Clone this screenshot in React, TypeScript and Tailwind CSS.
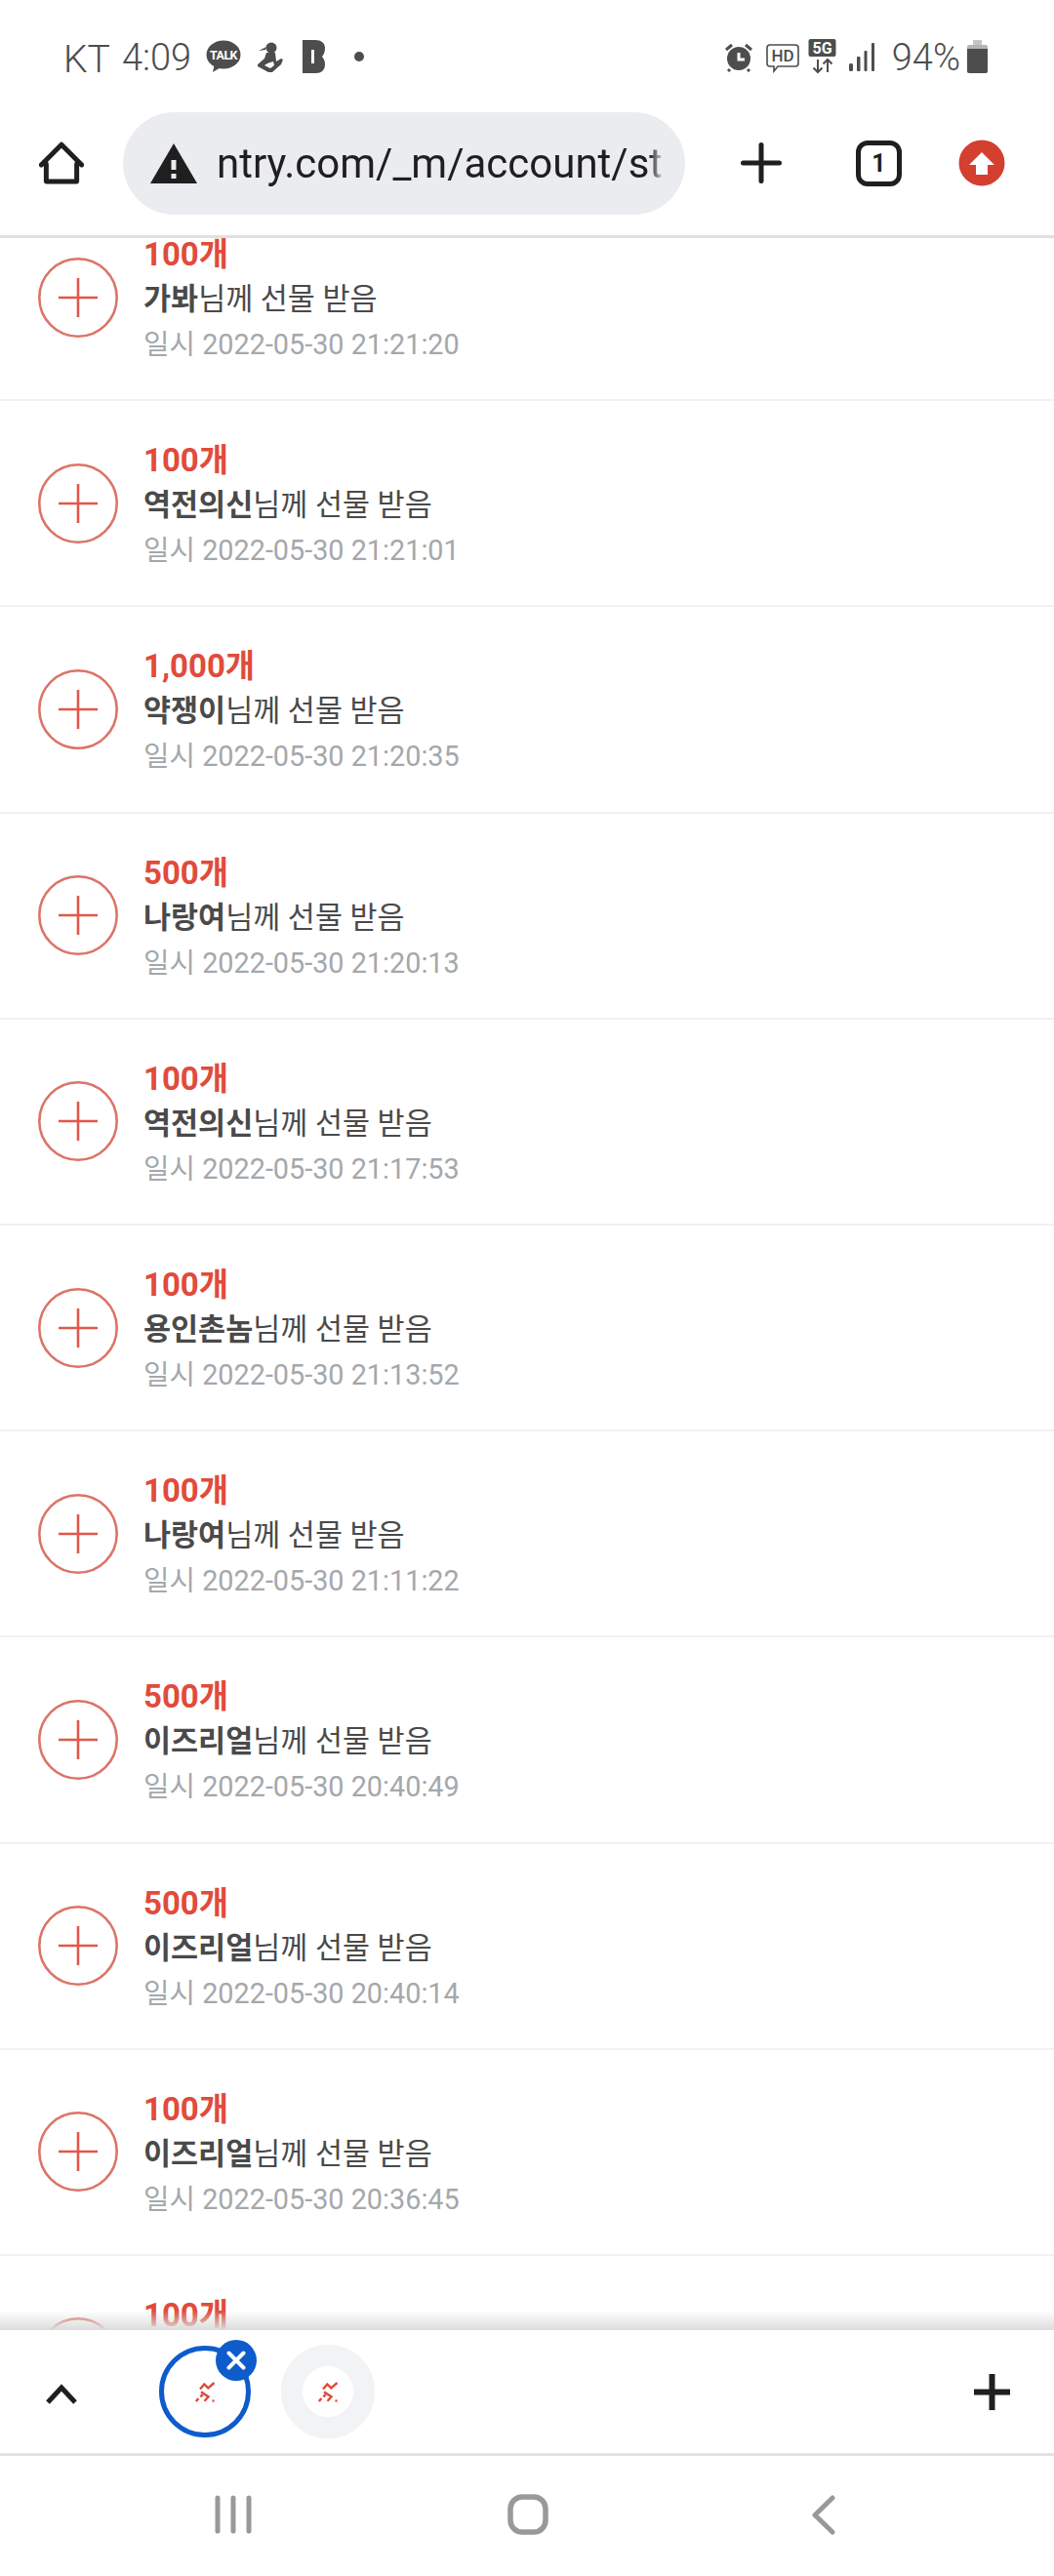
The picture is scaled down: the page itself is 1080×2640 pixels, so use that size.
import React from "react";

const rows = [
  ["100개", "가봐", "2022-05-30 21:21:20"],
  ["100개", "역전의신", "2022-05-30 21:21:01"],
  ["1,000개", "약쟁이", "2022-05-30 21:20:35"],
  ["500개", "나랑여", "2022-05-30 21:20:13"],
  ["100개", "역전의신", "2022-05-30 21:17:53"],
  ["100개", "용인촌놈", "2022-05-30 21:13:52"],
  ["100개", "나랑여", "2022-05-30 21:11:22"],
  ["500개", "이즈리얼", "2022-05-30 20:40:49"],
  ["500개", "이즈리얼", "2022-05-30 20:40:14"],
  ["100개", "이즈리얼", "2022-05-30 20:36:45"],
  ["100개", "", ""],
];

function Favicon() {
  return (
    <svg width="21" height="21" viewBox="0 0 21 21" fill="none" stroke="#dd4b39" strokeWidth="2.4">
      <path d="M5 7.5 9.3 2.5l4 3.8L19.5 1" />
      <path d="M.8 20 3.5 17M5.3 15.3 7.8 13" />
      <path d="M6 10.3l7.5 5-4 4.5" />
      <path d="M17.5 19.5h2" />
    </svg>
  );
}

function Row({ amount, name, date }: { amount: string; name: string; date: string }) {
  return (
    <div className="h-[211.2px] shrink-0 box-border border-b-2 border-[#f1f1f1] flex items-center pl-[39px]">
      <svg width="82" height="82" viewBox="0 0 82 82" fill="none" className="shrink-0">
        <circle cx="41" cy="41" r="39.7" stroke="#dc7468" strokeWidth="2.6" />
        <path d="M21 41h40M41 21v40" stroke="#e2574a" strokeWidth="2.6" />
      </svg>
      <div className="ml-[26px] pt-[5px] flex flex-col">
        <div className="h-[46px] leading-[46px] text-[33px] font-bold text-[#e14b3b]">{amount}</div>
        <div className="h-[46px] leading-[46px] text-[30.5px] text-[#4a4a4a]">
          <b className="font-bold">{name}</b>님께 선물 받음
        </div>
        <div className="h-[46px] leading-[46px] text-[28.8px] text-[#a4a8ac]">일시 {date}</div>
      </div>
    </div>
  );
}

export default function App() {
  return (
    <div className="w-[1080px] h-[2640px] flex flex-col overflow-hidden bg-white font-[Roboto,'Noto_Sans_CJK_KR',sans-serif]">
      {/* status bar */}
      <div className="h-[115px] shrink-0 flex items-start pt-[38px] text-[#4d4d4d] font-light">
        <span className="ml-[65px] text-[39px] leading-[44px] mt-[1px]">KT</span>
        <span className="ml-[12px] text-[38px] leading-[42px]">4:09</span>
        <svg width="36" height="34" viewBox="0 0 36 34" className="ml-[15px] mt-[3px]">
          <ellipse cx="18" cy="15" rx="17.5" ry="14.5" fill="#4d4d4d" />
          <path d="M9 24 7 33l10-6z" fill="#4d4d4d" />
          <text x="18" y="19.5" textAnchor="middle" fontSize="12.5" fontWeight="700" fill="#fff" fontFamily="Roboto" letterSpacing="-0.6">TALK</text>
        </svg>
        <svg width="28" height="32" viewBox="0 0 28 32" fill="#4d4d4d" className="ml-[15px] mt-[5px]">
          <circle cx="16" cy="6" r="5.5" />
          <path d="M11 5 3 9l7-1z" />
          <path d="M11 11h9l1 9 5-3 2 1-2 5-9 8-4 0-11-6 0-2 7-6zm1 11-3 2 6 3 4-3-1-4z" fillRule="evenodd" />
        </svg>
        <svg width="25" height="34" viewBox="0 0 25 34" className="ml-[19px] mt-[3px]">
          <path d="M1 0h13c6 0 10 3 10 8 0 4-1 7-3 9 2 2 3 5 3 8 0 6-4 9-9 9H1z" fill="#4d4d4d" />
          <rect x="10" y="10" width="3" height="14" fill="#fff" />
        </svg>
        <div className="ml-[29px] mt-[15px] w-[10px] h-[10px] rounded-full bg-[#4d4d4d]" />
        <div className="flex-1" />
        <svg width="30" height="30" viewBox="0 0 30 30" fill="#4d4d4d" className="mt-[6px]">
          <circle cx="15" cy="16" r="12" />
          <path d="M2 7l6-5M28 7l-6-5M6 27l-2 2M24 27l2 2" stroke="#4d4d4d" strokeWidth="3" />
          <path d="M15 10v7h6" stroke="#fff" strokeWidth="3" fill="none" />
        </svg>
        <svg width="34" height="32" viewBox="0 0 34 32" className="ml-[13px] mt-[7px]">
          <path d="M4 1h26a3 3 0 0 1 3 3v16a3 3 0 0 1-3 3H12l-4 5v-5H4a3 3 0 0 1-3-3V4a3 3 0 0 1 3-3z" fill="none" stroke="#4d4d4d" strokeWidth="1.6" />
          <text x="17" y="18" textAnchor="middle" fontSize="17" fontWeight="500" fill="#4d4d4d" fontFamily="Roboto">HD</text>
        </svg>
        <svg width="29" height="36" viewBox="0 0 29 36" className="ml-[9px] mt-[2px]">
          <rect x="0.5" y="0" width="28" height="18" rx="2" fill="#4d4d4d" />
          <text x="14.5" y="15" textAnchor="middle" fontSize="16" fontWeight="700" fill="#fff" fontFamily="Roboto">5G</text>
          <path d="M10 21v13M5.5 29.5 10 34l4.500-4.500M20 34V21M15.500 25.500 20 21l4.500 4.500" fill="none" stroke="#4d4d4d" strokeWidth="2" />
        </svg>
        <svg width="28" height="30" viewBox="0 0 28 30" fill="#4d4d4d" className="ml-[13px] mt-[6px]">
          <rect x="0" y="21" width="4" height="8" rx="1.500" />
          <rect x="8" y="14" width="3.500" height="15" rx="1" />
          <rect x="15.500" y="8" width="3" height="21" rx="1" />
          <rect x="23" y="0" width="3" height="29" rx="1" />
        </svg>
        <span className="ml-[16px] text-[38px] leading-[42px]">94%</span>
        <svg width="22" height="34" viewBox="0 0 22 34" className="ml-[7px] mr-[67px] mt-[3px]">
          <path d="M6 0h9v5H6z" fill="#c4c4c4" />
          <path d="M2 5h17a2 2 0 0 1 2 2v3H0V7a2 2 0 0 1 2-2z" fill="#b5b5b5" />
          <path d="M0 9h21v23a2 2 0 0 1-2 2H2a2 2 0 0 1-2-2z" fill="#4d4d4d" />
        </svg>
      </div>

      {/* address bar */}
      <div className="h-[129px] shrink-0 box-border border-b-[3px] border-[#e1e1e0] flex items-start text-[#1f1f1f]">
        <svg width="46" height="46" viewBox="0 0 50 50" fill="none" stroke="#1f1f1f" strokeWidth="5.4" strokeLinejoin="round" strokeLinecap="round" className="ml-[40px] mt-[30px]">
          <path d="M8 25v19.500h34V25M2.500 26 25 3.500 47.500 26" />
        </svg>
        <div className="ml-[40px] w-[576px] h-[105px] rounded-full bg-[#ebecf0] flex items-center pl-[28px] overflow-hidden">
          <svg width="48" height="41" viewBox="0 0 48 41" className="shrink-0 -mt-[1px]">
            <path d="M0 41 24 0l24 41z" fill="#1f1f1f" />
            <rect x="21.500" y="17" width="5" height="10" fill="#ebecf0" />
            <rect x="21.500" y="31" width="5" height="5" fill="#ebecf0" />
          </svg>
          <div className="ml-[20px] w-[458px] overflow-hidden whitespace-nowrap text-[42px] leading-[60px] text-[#1f1f1f] [mask-image:linear-gradient(to_right,#000_calc(100%-14px),transparent)]">
            ntry.com/_m/account/stat
          </div>
        </div>
        <svg width="42" height="42" viewBox="0 0 42 42" fill="none" stroke="#1f1f1f" strokeWidth="5" strokeLinecap="round" className="ml-[57px] mt-[31px]">
          <path d="M21 2.500v37M2.500 21h37" />
        </svg>
        <div className="ml-[76px] mt-[29px] w-[47px] h-[47px] box-border rounded-[12px] border-[5px] border-[#1f1f1f] flex items-center justify-center text-[25px] font-bold leading-none">
          1
        </div>
        <svg width="48" height="48" viewBox="0 0 48 48" className="ml-[58px] mt-[28px]">
          <circle cx="24" cy="24" r="23.500" fill="#d43f30" />
          <path d="M24 13 37 26h-7v10H18V26h-7z" fill="#fff" />
        </svg>
      </div>

      {/* list */}
      <div className="relative flex-1 overflow-hidden">
        <div className="-mt-[44px] flex flex-col">
          {rows.map((r, i) => (
            <Row key={i} amount={r[0]} name={r[1]} date={r[2]} />
          ))}
        </div>
        <div className="absolute left-0 right-0 bottom-0 h-[20px] bg-gradient-to-b from-transparent to-[#dcdcdc]" />
      </div>

      {/* tab strip */}
      <div className="h-[129px] shrink-0 box-border border-b-[3px] border-[#e2e4e1] bg-white flex items-start">
        <svg width="32" height="22" viewBox="0 0 32 22" fill="none" stroke="#1f1f1f" strokeWidth="5" className="ml-[47px] mt-[54px]">
          <path d="M2 20 16 5l14 15" />
        </svg>
        <div className="relative ml-[84px] mt-[16px] w-[94px] h-[94px] box-border rounded-full border-[5px] border-[#0e5bcc] flex items-center justify-center">
          <Favicon />
          <div className="absolute -top-[11px] -right-[11px] w-[42px] h-[42px] rounded-full bg-[#0e5bcc] flex items-center justify-center">
            <svg width="20" height="20" viewBox="0 0 20 20" stroke="#fff" strokeWidth="4" strokeLinecap="round">
              <path d="M2.500 2.500l15 15M17.500 2.500l-15 15" />
            </svg>
          </div>
        </div>
        <div className="ml-[31px] mt-[15px] w-[96px] h-[96px] box-border rounded-full border-[22px] border-[#f2f3f5] flex items-center justify-center">
          <Favicon />
        </div>
        <div className="flex-1" />
        <svg width="37" height="37" viewBox="0 0 37 37" stroke="#1f1f1f" strokeWidth="6" className="mr-[45px] mt-[45px]">
          <path d="M18.500 0v37M0 18.500h37" />
        </svg>
      </div>

      {/* nav bar */}
      <div className="h-[123px] shrink-0 bg-white flex items-start">
        <svg width="38" height="40" viewBox="0 0 38 40" stroke="#999" strokeWidth="5" strokeLinecap="round" className="ml-[220px] mt-[40px]">
          <path d="M3 3v34M19 3v34M35 3v34" />
        </svg>
        <svg width="42" height="42" viewBox="0 0 42 42" fill="none" stroke="#999" strokeWidth="5.500" className="ml-[262px] mt-[39px]">
          <rect x="3" y="3" width="36" height="36" rx="12" />
        </svg>
        <svg width="24" height="41" viewBox="0 0 24 41" fill="none" stroke="#999" strokeWidth="5" strokeLinecap="round" strokeLinejoin="round" className="ml-[270px] mt-[40px]">
          <path d="M21 3 3 20.500 21 38" />
        </svg>
      </div>
    </div>
  );
}
